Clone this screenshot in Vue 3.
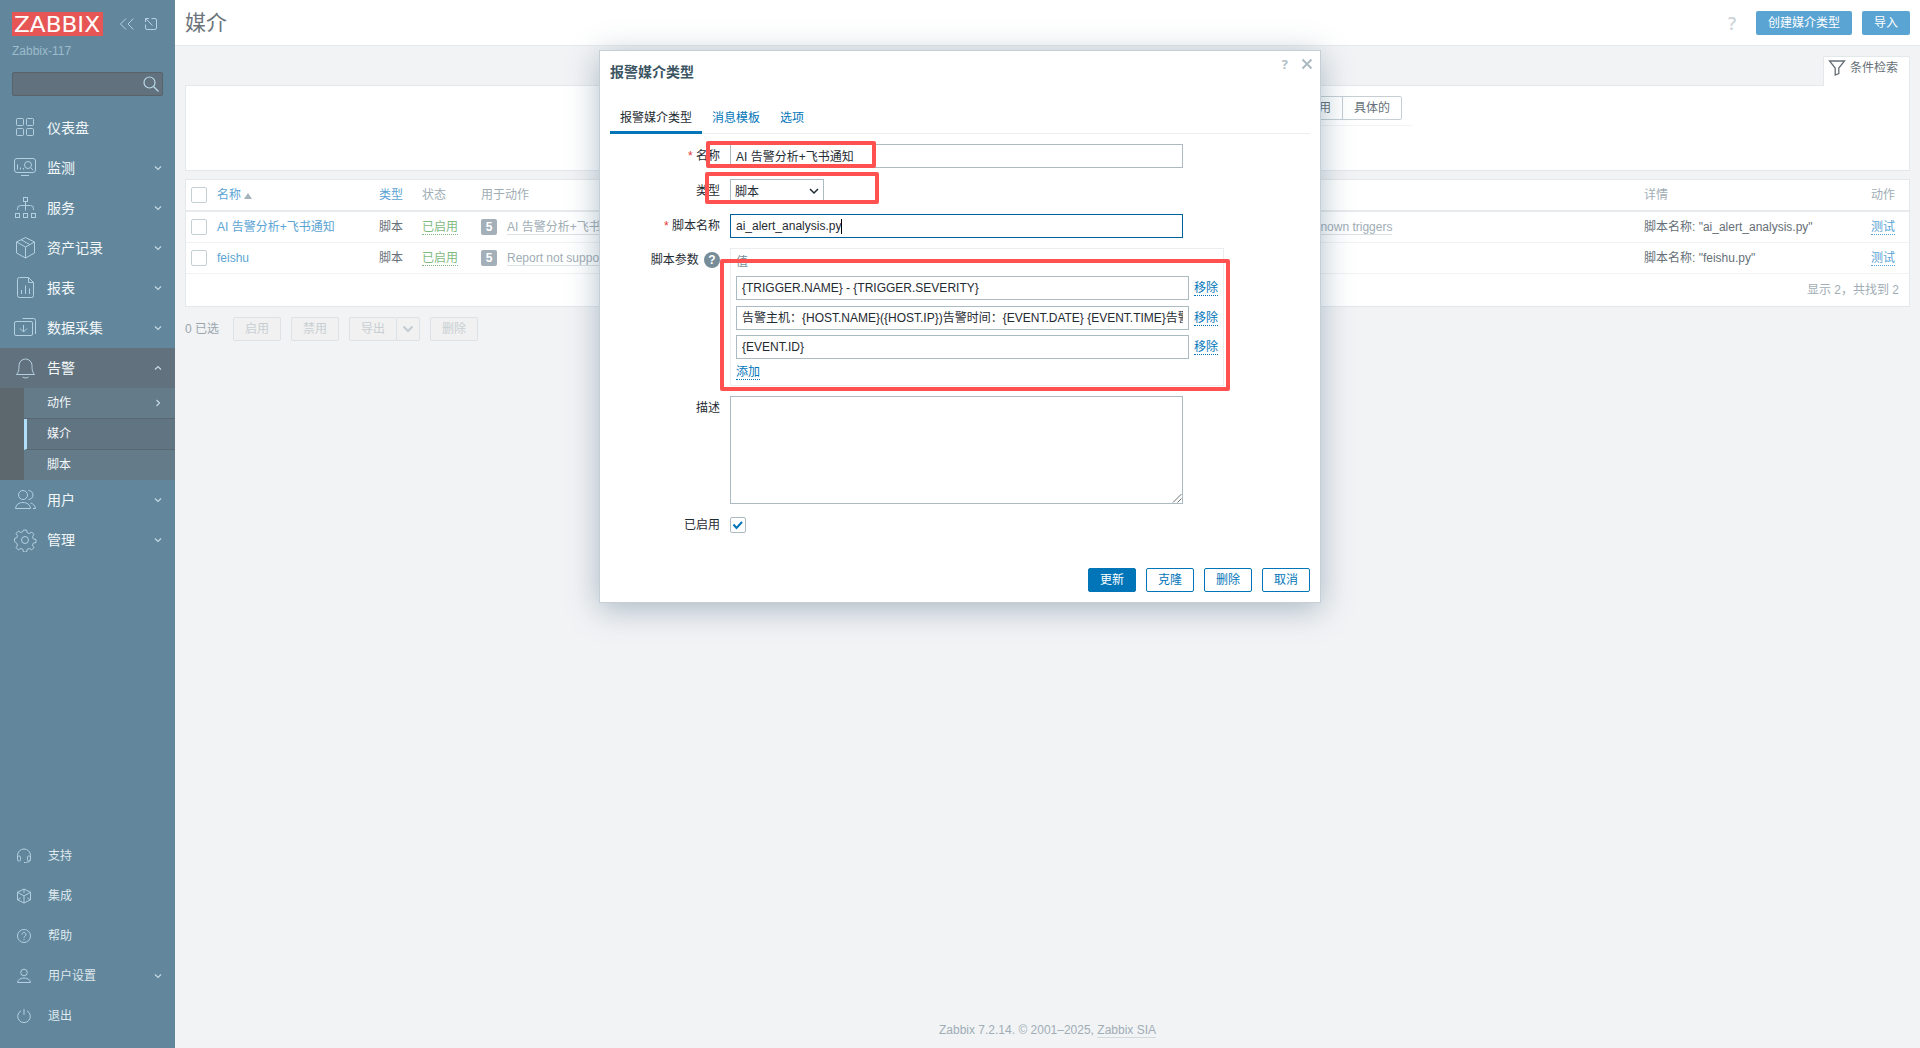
<template>
  <div class="app">
    <aside class="sidebar">
      <div class="brand">
        <svg class="logo" viewBox="0 0 91 24">
          <rect width="91" height="24" fill="#e65655" />
          <text x="2" y="20.3" textLength="86" lengthAdjust="spacingAndGlyphs">ZABBIX</text>
        </svg>
        <svg class="brand-icon collapse" viewBox="0 0 16 16"><path d="M7 2.500 1.500 8 7 13.500M14.500 2.500 9 8l5.500 5.500" /></svg>
        <svg class="brand-icon" viewBox="0 0 16 16"><path d="M8.500 2.500H12a1.500 1.500 0 0 1 1.500 1.500v8A1.500 1.500 0 0 1 12 13.500H4A1.500 1.500 0 0 1 2.500 12V8.500M9.500 9.500 2.500 2.500M2.500 6V2.500H6" /></svg>
      </div>
      <div class="server-name">Zabbix-117</div>
      <div class="search">
        <svg viewBox="0 0 16 16"><circle cx="6.500" cy="6.500" r="5.500" /><path d="m10.500 10.500 5 5" /></svg>
      </div>

      <nav class="menu-main">
        <div v-for="item in mainMenu" :key="item.label">
          <div class="menu-item" :class="{ open: item.children }">
            <svg class="menu-icon" viewBox="0 0 24 24" v-html="icons[item.icon]"></svg>
            <span class="menu-label">{{ item.label }}</span>
            <svg v-if="item.arrow" class="arrow" viewBox="0 0 8 8"><path :d="arrows[item.arrow]" /></svg>
          </div>
          <div v-if="item.children" class="submenu">
            <div v-for="sub in item.children" :key="sub.label" class="submenu-item" :class="{ selected: sub.selected }">
              <span>{{ sub.label }}</span>
              <svg v-if="sub.arrow" class="arrow" viewBox="0 0 8 8"><path :d="arrows.right" /></svg>
            </div>
          </div>
        </div>
      </nav>

      <nav class="menu-user">
        <div v-for="item in userMenu" :key="item.label" class="menu-item small">
          <svg class="menu-icon" viewBox="0 0 16 16" v-html="icons[item.icon]"></svg>
          <span class="menu-label">{{ item.label }}</span>
          <svg v-if="item.arrow" class="arrow" viewBox="0 0 8 8"><path :d="arrows.down" /></svg>
        </div>
      </nav>
    </aside>

    <div class="wrapper">
      <header class="page-header">
        <h1>媒介</h1>
        <span class="help">?</span>
        <button class="btn-blue">创建媒介类型</button>
        <button class="btn-blue">导入</button>
      </header>

      <div class="filter-tabs">
        <div class="filter-tab">
          <svg viewBox="0 0 18 16"><path d="M1.500 1h15l-5.700 7v5.500L7.200 15V8z" /></svg>
          <span>条件检索</span>
        </div>
      </div>
      <section class="filter">
        <div class="filter-form">
          <div class="radio-group">
            <span>已停用</span>
            <span>具体的</span>
          </div>
        </div>
      </section>

      <section class="list">
        <div class="row head">
          <i class="checkbox"></i>
          <span class="c-name link">名称 <b class="sort"></b></span>
          <span class="c-type link">类型</span>
          <span class="c-status">状态</span>
          <span class="c-actions">用于动作</span>
          <span class="c-details">详情</span>
          <span class="c-test">动作</span>
        </div>
        <div v-for="row in rows" :key="row.name" class="row">
          <i class="checkbox"></i>
          <span class="c-name link">{{ row.name }}</span>
          <span class="c-type">脚本</span>
          <span class="c-status"><u class="green">已启用</u></span>
          <span class="c-actions">
            <em>5</em>
            <template v-for="(action, index) in row.actions" :key="action"><span v-if="index" class="comma">, </span><u class="grey">{{ action }}</u></template>
          </span>
          <span class="c-details">{{ row.details }}</span>
          <span class="c-test"><u class="blue">测试</u></span>
        </div>
        <div class="list-footer">显示 2，共找到 2</div>
      </section>

      <div class="bulk">
        <span class="selected-count">0 已选</span>
        <button>启用</button>
        <button>禁用</button>
        <div class="split">
          <button>导出</button>
          <button class="toggle"><svg viewBox="0 0 12 12"><path d="m1.500 3.500 4.500 4.500 4.500-4.500" /></svg></button>
        </div>
        <button>删除</button>
      </div>

      <footer class="page-footer">Zabbix 7.2.14. © 2001–2025, <u>Zabbix SIA</u></footer>
    </div>

    <div class="dialog">
      <div class="dialog-head">
        <h4>报警媒介类型</h4>
        <div class="dialog-controls">
          <span>?</span>
          <svg viewBox="0 0 12 12"><path d="m1.500 1.500 9 9m0-9-9 9" /></svg>
        </div>
      </div>
      <div class="tabs">
        <span class="tab active">报警媒介类型</span>
        <span class="tab">消息模板</span>
        <span class="tab">选项</span>
      </div>

      <div class="form">
        <label class="required">名称</label>
        <div class="field input name">{{ form.name }}</div>

        <label>类型</label>
        <div class="field select">
          {{ form.type }}
          <svg viewBox="0 0 10 10"><path d="m1 3 4 4 4-4" /></svg>
        </div>

        <label class="required">脚本名称</label>
        <div class="field input focused">{{ form.script }}<i class="caret"></i></div>

        <label class="params-label">脚本参数 <b class="hint">?</b></label>
        <div class="params">
          <div class="params-head">值</div>
          <div v-for="param in form.params" :key="param" class="param">
            <div class="field input"><span class="clip">{{ param }}</span></div>
            <u>移除</u>
          </div>
          <u class="add">添加</u>
        </div>

        <label>描述</label>
        <div class="field textarea">
          <svg viewBox="0 0 10 10"><path d="M1 9.500 9.500 1M5.500 9.500l4-4" /></svg>
        </div>

        <label class="enabled-label">已启用</label>
        <i class="checkbox checked"><svg viewBox="0 0 14 14"><path d="m2.500 6.500 3 3.500 5.500-6" /></svg></i>
      </div>

      <div class="dialog-footer">
        <button class="primary">更新</button>
        <button>克隆</button>
        <button>删除</button>
        <button>取消</button>
      </div>

      <div class="mark mark-name"></div>
      <div class="mark mark-type"></div>
      <div class="mark mark-params"></div>
    </div>
  </div>
</template>

<script setup>
import { reactive } from 'vue'

const arrows = {
  down: 'M1 2.500 4 5.500 7 2.500',
  up: 'M1 5.500 4 2.500 7 5.500',
  right: 'M2.500 1 5.500 4 2.500 7',
}

const icons = {
  dashboard: '<rect x="3.500" y="2.500" width="7" height="7" rx="1"/><rect x="13.500" y="2.500" width="7" height="7" rx="1"/><rect x="3.500" y="12.500" width="7" height="7" rx="1"/><rect x="13.500" y="12.500" width="7" height="7" rx="1"/>',
  monitoring: '<rect x="1.500" y="2.500" width="21" height="14" rx="2.500"/><path d="M8 19.500h8M4.500 13.500v-5M7.500 13.500v-2M10.500 13.500v-1.500M17.500 11.500l2.500 2.500"/><circle cx="15" cy="9" r="3.500"/>',
  services: '<rect x="10.500" y="1.500" width="4" height="4"/><rect x="2.500" y="17.500" width="4" height="4"/><rect x="10.500" y="17.500" width="4" height="4"/><rect x="18.500" y="17.500" width="4" height="4"/><path d="M12.500 5.500v9M4.500 14v-1.500a3 3 0 0 1 3-3h10a3 3 0 0 1 3 3V14"/>',
  inventory: '<path d="m12.500 1.500 9 4.500v11l-9 5-9-5V6zM3.500 6l9 5 9-5M12.500 11v11M8 3.700l9 5"/>',
  reports: '<path d="M15.500 1.500H6.500a2 2 0 0 0-2 2v16a2 2 0 0 0 2 2h12a2 2 0 0 0 2-2v-13zV6.500h5M8.500 18v-4M12.500 18V9.500M16.500 18v-5.500"/>',
  data: '<rect x="1.500" y="5.500" width="18" height="14" rx="1.500"/><path d="M9.500 2.500h11a2 2 0 0 1 2 2v13.500M10.500 9v7M7 12.500l3.500 3.500 3.500-3.500"/>',
  alerts: '<path d="M3.500 18.500c2-2.500 2.500-4 2.500-9a6.500 6.500 0 0 1 13 0c0 5 .5 6.500 2.500 9zM9.500 21c1.500 1.300 4.500 1.300 6 0"/>',
  users: '<circle cx="10" cy="7" r="4.500"/><path d="M2.500 20.500c.5-4 3.500-6 7.500-6s7 2 7.500 6zM15.500 2.500a4.500 4.500 0 0 1 0 9M17.500 15c2.500.5 4.500 2.500 5 5.500H20"/>',
  admin: '<circle cx="12" cy="12" r="3.500"/><path d="M10.500 2h3l.7 2.700 2 .8 2.500-1.400 2.200 2.200-1.400 2.500.8 2 2.700.7v3l-2.700.7-.8 2 1.400 2.500-2.200 2.200-2.500-1.400-2 .8-.7 2.700h-3l-.7-2.700-2-.8-2.500 1.400-2.200-2.200 1.400-2.500-.8-2L1.500 13.500v-3l2.200-.7.8-2-1.400-2.500 2.200-2.200 2.500 1.400 2-.8z"/>',
  support: '<path d="M1.500 10V7.500a6.500 6.500 0 0 1 13 0V10M14 11.500c0 2-1.500 3-6 3"/><rect x="1.500" y="8" width="3" height="5" rx="1.200"/><rect x="11.500" y="8" width="3" height="5" rx="1.200"/>',
  integrations: '<path d="m8 1 6.500 3.200v7.600L8 15l-6.500-3.200V4.200zM1.500 4.200 8 8l6.500-3.800M8 8v7M1.500 11.800l3-1.700M14.500 11.800l-3-1.700M8 1v4"/>',
  help: '<circle cx="8" cy="8" r="6.500"/><path d="M6 6.500a2 2 0 1 1 3 1.700c-.8.500-1 .8-1 1.600M8 11v1.200"/>',
  profile: '<circle cx="8" cy="4.500" r="3.300"/><path d="M1.500 14.500c.5-3 3-4.500 6.500-4.500s6 1.500 6.500 4.500z"/>',
  signout: '<path d="M5 2.800a6.300 6.300 0 1 0 6 0M8 1v6"/>',
}

const mainMenu = [
  { label: '仪表盘', icon: 'dashboard' },
  { label: '监测', icon: 'monitoring', arrow: 'down' },
  { label: '服务', icon: 'services', arrow: 'down' },
  { label: '资产记录', icon: 'inventory', arrow: 'down' },
  { label: '报表', icon: 'reports', arrow: 'down' },
  { label: '数据采集', icon: 'data', arrow: 'down' },
  {
    label: '告警',
    icon: 'alerts',
    arrow: 'up',
    children: [
      { label: '动作', arrow: true },
      { label: '媒介', selected: true },
      { label: '脚本' },
    ],
  },
  { label: '用户', icon: 'users', arrow: 'down' },
  { label: '管理', icon: 'admin', arrow: 'down' },
]

const userMenu = [
  { label: '支持', icon: 'support' },
  { label: '集成', icon: 'integrations' },
  { label: '帮助', icon: 'help' },
  { label: '用户设置', icon: 'profile', arrow: true },
  { label: '退出', icon: 'signout' },
]

const rows = [
  {
    name: 'AI 告警分析+飞书通知',
    actions: [
      'AI 告警分析+飞书通知',
      'Report not supported items',
      'Report not supported low level discovery rules',
      'Report problems to Zabbix administrators',
      'Report unknown triggers',
    ],
    details: '脚本名称: "ai_alert_analysis.py"',
  },
  {
    name: 'feishu',
    actions: ['Report not supported items'],
    details: '脚本名称: "feishu.py"',
  },
]

const form = reactive({
  name: 'AI 告警分析+飞书通知',
  type: '脚本',
  script: 'ai_alert_analysis.py',
  params: [
    '{TRIGGER.NAME} - {TRIGGER.SEVERITY}',
    '告警主机：{HOST.NAME}({HOST.IP})告警时间：{EVENT.DATE} {EVENT.TIME}告警',
    '{EVENT.ID}',
  ],
})
</script>

<style>
body { background: #f2f3f5; }
</style>

<style scoped>
* { box-sizing: border-box; margin: 0; padding: 0; }

.app {
  position: relative;
  display: flex;
  height: 1048px;
  overflow: hidden;
  background: #f2f3f5;
  color: #666f77;
  font-family: 'Liberation Sans', 'Noto Sans CJK SC', sans-serif;
  font-size: 12px;
  line-height: 14px;
}

svg { fill: none; display: block; flex: none; }
u { text-decoration: none; }
i, em { font-style: normal; }
button { font: inherit; }

/* sidebar */
.sidebar {
  display: flex;
  flex-direction: column;
  width: 175px;
  flex: none;
  background: #62879d;
}

.brand {
  display: flex;
  align-items: center;
  padding: 12px 0 0 12px;
}

.logo { width: 91px; height: 24px; }
.logo text { font-family: 'DejaVu Sans', sans-serif; font-size: 22px; fill: #fff; }

.brand-icon {
  width: 16px;
  height: 16px;
  stroke: #b5d1e1;
}

.brand-icon.collapse { margin: 0 8px 0 16px; }

.server-name {
  padding: 8px 12px 0;
  height: 36px;
  color: #9dbbcb;
}

.search {
  display: flex;
  justify-content: flex-end;
  align-items: center;
  width: 151px;
  height: 24px;
  margin: 0 0 12px 12px;
  padding-right: 3px;
  border: 1px solid #596268;
  border-radius: 2px;
  background: #61717d;
}

.search svg { width: 16px; height: 16px; stroke: #bad9e9; stroke-width: 1.2; }

.menu-item {
  display: flex;
  align-items: center;
  height: 40px;
  padding: 0 13px;
  color: #f3f7f9;
  font-size: 14px;
}

.menu-item.open { background: #61717d; }
.menu-icon { width: 24px; height: 24px; stroke: #b4d0e0; }
.menu-label { flex: 1; padding-left: 10px; }
.arrow { width: 8px; height: 8px; stroke: #c6dae5; stroke-width: 1.2; }

.submenu {
  padding-left: 24px;
  background: #5d676e;
}

.submenu-item {
  display: flex;
  justify-content: space-between;
  align-items: center;
  height: 31px;
  padding: 0 13px 0 23px;
  border-bottom: 1px solid #596870;
  background: #647b8a;
  color: #f3f7f9;
}

.submenu-item:last-child { height: 30px; border-bottom: 0; }

.submenu-item.selected {
  padding-left: 20px;
  border-left: 3px solid #b0dffa;
  background: #617482;
}

.menu-user { margin-top: auto; padding-bottom: 12px; }

.menu-item.small { font-size: 12px; color: #dfe9ee; padding-left: 16px; }
.small .menu-icon { width: 16px; height: 16px; }
.small .menu-label { padding-left: 16px; }

/* page */
.wrapper {
  display: flex;
  flex-direction: column;
  flex: 1;
  min-width: 0;
}

.page-header {
  display: flex;
  align-items: center;
  gap: 10px;
  height: 46px;
  padding: 0 10px;
  border-bottom: 1px solid #e7eaed;
  background: #fff;
}

h1 {
  flex: 1;
  font-size: 21px;
  font-weight: 400;
  line-height: 28px;
  color: #6c757c;
}

.help {
  width: 10px;
  margin-right: 8px;
  font: 600 18px/24px 'Open Sans', sans-serif;
  color: #ccd5d9;
}

.btn-blue {
  height: 24px;
  padding: 0 12px;
  border: 0;
  border-radius: 2px;
  background: #5aa4d3;
  color: #fff;
}

.filter-tabs {
  display: flex;
  justify-content: flex-end;
  padding: 10px 10px 0 0;
}

.filter-tab {
  display: flex;
  align-items: center;
  gap: 4px;
  position: relative;
  z-index: 1;
  width: 87px;
  height: 30px;
  margin-bottom: -1px;
  padding: 0 0 7px 4px;
  border: 1px solid #e3e8eb;
  border-bottom: 0;
  border-radius: 2px 2px 0 0;
  background: #fff;
}

.filter-tab svg { width: 18px; height: 16px; stroke: #666f77; stroke-width: 1.3; }

.filter {
  height: 86px;
  margin: 0 10px 8px;
  padding: 10px 0 0 700px;
  border: 1px solid #e3e8eb;
  background: #fff;
}

.filter-form {
  width: 526px;
  height: 30px;
  display: flex;
  justify-content: flex-end;
  padding-right: 10px;
  border-bottom: 1px solid #f1f3f4;
}

.radio-group { display: flex; }

.radio-group span {
  height: 24px;
  padding: 4px 11px;
  border: 1px solid #c5cfd4;
}

.radio-group span + span { margin-left: -1px; border-radius: 0 2px 2px 0; }

.list {
  margin: 0 10px;
  border: 1px solid #e3e8eb;
  background: #fff;
}

.row {
  display: grid;
  grid-template-columns: 26px 162px 43px 59px 1163px 227px 1fr;
  align-items: center;
  height: 31px;
  padding-left: 5px;
  border-bottom: 1px solid #f0f2f4;
  white-space: nowrap;
}

.row.head {
  height: 32px;
  border-bottom: 2px solid #e7ebee;
  color: #a0adb5;
}

.row .link { color: #5aa4d3; }

.sort {
  display: inline-block;
  border: 4px solid transparent;
  border-top: 0;
  border-bottom: 6px solid #a6b3bb;
}

.checkbox {
  display: block;
  width: 16px;
  height: 16px;
  border: 1px solid #c5d0d5;
  border-radius: 2px;
  background: #fff;
}

.green { color: #7fba81; border-bottom: 1px dotted #7fba81; }
.blue { color: #5aa4d3; border-bottom: 1px dotted #5aa4d3; }
.grey { color: #a0adb5; border-bottom: 1px solid #dce1e4; }
.comma { white-space: pre; }

.c-actions em {
  display: inline-block;
  width: 16px;
  height: 16px;
  margin-right: 10px;
  border-radius: 2px;
  background: #a3b0b9;
  color: #fff;
  font-weight: 700;
  line-height: 16px;
  text-align: center;
}

.list-footer {
  height: 32px;
  padding: 9px 10px 0 0;
  color: #a0adb5;
  text-align: right;
}

.bulk {
  display: flex;
  align-items: center;
  gap: 10px;
  padding: 10px 10px 0;
  color: #9aa6ae;
}

.selected-count { width: 38px; }

.bulk button {
  height: 24px;
  padding: 0 11px;
  border: 1px solid #dce2e5;
  border-radius: 2px;
  background: #f1f1f1;
  color: #c8cfd3;
}

.split { display: flex; }
.bulk .toggle { width: 24px; margin-left: -1px; padding: 0 5px; }
.split svg { width: 12px; height: 12px; stroke: #c3cdd2; stroke-width: 2; }

.page-footer {
  margin-top: auto;
  padding-bottom: 11px;
  text-align: center;
  color: #a0adb5;
}

.page-footer u { border-bottom: 1px solid #d3dade; }

/* dialog */
.dialog {
  position: absolute;
  left: 599px;
  top: 50px;
  width: 722px;
  height: 553px;
  padding: 0 10px;
  border: 1px solid #c5cfd5;
  background: #fff;
  box-shadow: 0 6px 30px rgba(50, 90, 115, 0.38);
  color: #1f2c33;
}

.dialog-head {
  display: flex;
  justify-content: space-between;
  height: 48px;
}

h4 { padding-top: 12px; font-size: 14px; line-height: 18px; color: #3c5563; }

.dialog-controls {
  display: flex;
  gap: 13px;
  padding-top: 6px;
  margin-right: -3px;
  font: 700 13px/14px 'Open Sans', sans-serif;
  color: #b2c0c7;
}

.dialog-controls svg { width: 12px; height: 12px; margin-top: 1px; stroke: #acbbc2; stroke-width: 2; }

.tabs {
  display: flex;
  height: 35px;
  border-bottom: 1px solid #ebeef0;
}

.tab {
  height: 35px;
  padding: 12px 10px 0;
  color: #0275b8;
}

.tab.active { color: #1f2c33; border-bottom: 3px solid #0275b8; }

.form {
  display: grid;
  grid-template-columns: 110px 494px;
  column-gap: 10px;
  row-gap: 10px;
  padding-top: 10px;
}

label { padding-top: 5px; text-align: right; }
.required::before { content: '* '; color: #e33734; }

.field {
  width: 453px;
  height: 24px;
  padding: 4px 5px;
  border: 1px solid #acbbc2;
  background: #fff;
  white-space: nowrap;
}

.name { margin-bottom: 1px; padding-top: 5px; }

.select {
  display: flex;
  justify-content: space-between;
  width: 94px;
  height: 25px;
  padding: 5px 4px;
}

.select svg { width: 10px; height: 10px; margin-top: 1px; stroke: #1f2c33; stroke-width: 1.5; }
.focused { display: flex; border-color: #00629c; }
.caret { width: 1px; height: 15px; background: #000; }

.params-label { padding-top: 4px; white-space: nowrap; }

.hint {
  display: inline-block;
  width: 16px;
  height: 16px;
  margin-left: 2px;
  border-radius: 50%;
  background: #768d99;
  color: #fff;
  line-height: 16px;
  text-align: center;
}

.params {
  width: 494px;
  height: 138px;
  padding: 4px 5px;
  border: 1px solid #ebeef0;
}

.params-head { height: 23px; padding-top: 2px; color: #768d99; }

.param {
  display: flex;
  gap: 5px;
  height: 29.500px;
}

.param .field { flex: none; }
.clip { display: block; overflow: hidden; }

.params u {
  align-self: flex-start;
  margin-top: 5px;
  border-bottom: 1px dotted #0275b8;
  color: #0275b8;
  white-space: nowrap;
}

.params .add { display: inline-block; margin-top: 0; }

.textarea {
  display: flex;
  justify-content: flex-end;
  align-items: flex-end;
  height: 108px;
  padding: 0;
}

.textarea svg { width: 10px; height: 10px; stroke: #5a6268; stroke-width: 0.9; }

.enabled-label { padding-top: 4px; }
.form .checkbox { margin-top: 3px; border-color: #acbbc2; }
.checked svg { width: 14px; height: 14px; stroke: #0275b8; stroke-width: 2; }

.dialog-footer {
  display: flex;
  justify-content: flex-end;
  gap: 10px;
  margin-top: 35px;
}

.dialog-footer button {
  height: 24px;
  padding: 0 11px;
  border: 1px solid #0275b8;
  border-radius: 2px;
  background: #fff;
  color: #0275b8;
}

.dialog-footer .primary { background: #0275b8; color: #fff; }

/* highlight frames over the dialog */
.mark {
  position: absolute;
  border: 4px solid #ff5150;
  border-radius: 2px;
}

.mark-name { left: 106px; top: 90px; width: 170px; height: 27px; }
.mark-type { left: 105px; top: 121px; width: 174px; height: 32px; }
.mark-params { left: 120px; top: 208px; width: 510px; height: 132px; }
</style>
